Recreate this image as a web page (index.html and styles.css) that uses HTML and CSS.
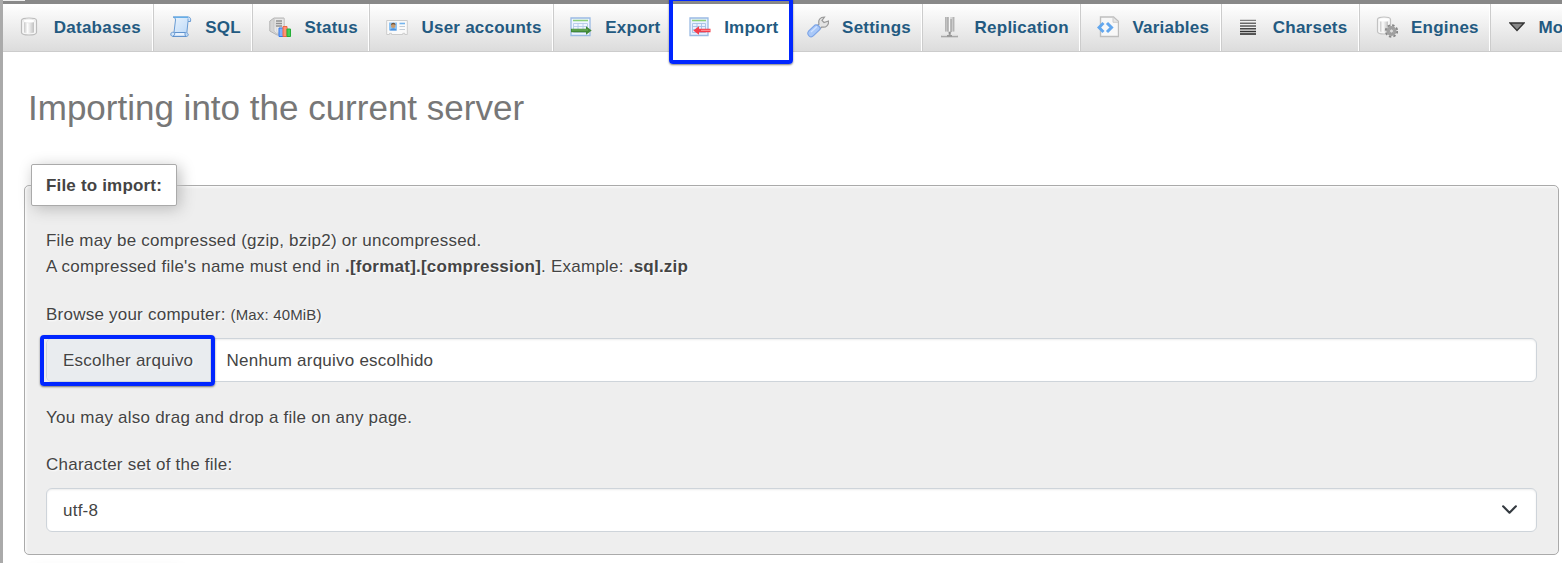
FILE: index.html
```html
<!DOCTYPE html>
<html lang="en">
<head>
<meta charset="utf-8">
<title>Import</title>
<link rel="stylesheet" href="styles.css">
</head>
<body>
<svg width="0" height="0" class="defs">
  <defs>
    <linearGradient id="metal" x1="0" x2="1"><stop offset="0" stop-color="#c8c8c8"/><stop offset=".35" stop-color="#fdfdfd"/><stop offset="1" stop-color="#c0c0c0"/></linearGradient>
    <linearGradient id="sheet" x1="0" x2="1" y2="1"><stop offset="0" stop-color="#edf5fd"/><stop offset="1" stop-color="#b5d5f7"/></linearGradient>
    <linearGradient id="lines" gradientUnits="userSpaceOnUse" x1="0" x2="0" y1="3" y2="18"><stop offset="0" stop-color="#888"/><stop offset="1" stop-color="#222"/></linearGradient>
  </defs>
</svg>
<div class="window">
  <div class="sidebar-edge"></div>
  <div class="page">
    <div class="top-band"><div class="top-notch"></div></div>
    <nav class="tabs">
      <a class="tab tab-first">
        <svg class="icon" viewBox="0 0 22 22"><path d="M3.500 4.500v12c0 1.500 3 2.500 7.500 2.500s7.500-1 7.500-2.500v-12c0-1.500-3-2.500-7.500-2.500s-7.500 1-7.500 2.500z" fill="#f6f6f6" stroke="#bcbcbc" stroke-width="1.200"/><path d="M6 6v10.500c2 1 8 1 10 0V6z" fill="url(#metal)"/><ellipse cx="11" cy="5" rx="6" ry="1.900" fill="#fff" stroke="#ddd" stroke-width=".6"/></svg>
        <span>Databases</span></a>
      <a class="tab">
        <svg class="icon" viewBox="0 0 22 22"><path d="M3 1h15.500c2 .3 2.500 2 2 4.500H18L16.800 17c2 .5 2 3-.3 3.500H3c-3-.3-2.800-4-.5-4.200H4L5.500 4C5.500 2 4.500 1.500 3 1z" fill="url(#sheet)" stroke="#699bd3"/><path d="M4.500 16.500h11c-1 1.500-.5 3 .5 3.800H3c1.500-.8 2-2 1.500-3.800z" fill="#e8f3ff" stroke="#5489c7" stroke-width=".9"/><path d="M4 1.200h14" stroke="#58a9e8" stroke-width="1.200"/><path d="M18 5.500V2.500" stroke="#78a6d8"/></svg>
        <span>SQL</span></a>
      <a class="tab">
        <svg class="icon" viewBox="0 0 22 22"><path d="M.8 5 5 2h10v17H8l-7.200-4z" fill="#d5d5d5" stroke="#b4b4b4"/><path d="M5 3v12l3 3M5.500 2.500H15V17H8.500" fill="#e8e8e8" stroke="#c4c4c4" stroke-width=".8"/><path d="M7 5h6M7 7.500h6M7 10h6" stroke="#909090" stroke-width="1.300"/><path d="M10 12h4.500v8.500H10z" fill="#7eafff" stroke="#3479e8"/><path d="M14 10.500h4v10h-4z" fill="#ff9274" stroke="#ee6645"/><path d="M18 13h3.500v7.500H18z" fill="#45ce55" stroke="#25ae37"/></svg>
        <span>Status</span></a>
      <a class="tab">
        <svg class="icon" viewBox="0 0 22 22"><path d="M.7 4.500h20.600v14h-2.500v-1.200h-2v1.200H5.500v-1.200h-2v1.200H.7z" fill="#fafafa" stroke="#ccc"/><path d="M3 6.500h8v8H3z" fill="#8ec4f4"/><path d="M4 14.500c.5-3 6-3 6.500 0z" fill="#4c91dd"/><circle cx="7.200" cy="9.700" r="2.300" fill="#c89b6e"/><path d="M5 9c0-3 4.500-3 4.500 0-1.500-1-3-1-4.500 0z" fill="#6f5138"/><path d="M13.500 7.500h5.500" stroke="#74b4ee" stroke-width="1.600"/><path d="M13.500 10.500h5.500M13.500 13.500h5.500" stroke="#c2ccd6"/></svg>
        <span>User accounts</span></a>
      <a class="tab">
        <svg class="icon" viewBox="0 0 22 22"><path d="M1 2h19v17.500H1z" fill="#f0f6ff" stroke="#9abbe4" stroke-width="1.300"/><path d="M3 4.500h15" stroke="#8bd078" stroke-width="1.500"/><path d="M3.500 7.500h14v9h-14zM3.500 10.500h14M3.500 13.500h14M8 7.500v9M13 7.500v9" fill="none" stroke="#b4cbea" stroke-width=".9"/><path d="M1 12.700h15v-2.500l5.700 4.300-5.700 4.300v-2.500H1z" fill="#438a38"/><path d="M2 14h16" stroke="#73b662"/></svg>
        <span>Export</span></a>
      <a class="tab tab-active">
        <svg class="icon" viewBox="0 0 22 22"><path d="M1 2h18v17.500H1z" fill="#e8f0ff" stroke="#9abbe4" stroke-width="1.300"/><path d="M3 4.500h14" stroke="#8bd078" stroke-width="1.500"/><path d="M3.500 7.500h13v9h-13zM3.500 10.500h13M3.500 13.500h13M8 7.500v9M12.500 7.500v9" fill="none" stroke="#a4bee4" stroke-width=".9"/><path d="M21.500 12.700H10v-2.500l-5.700 4.300 5.700 4.300v-2.500h11.500z" fill="#f43e4d"/><path d="M12 14.400h9" stroke="#ff8a92" stroke-width="1.200"/></svg>
        <span>Import</span></a>
      <a class="tab">
        <svg class="icon" viewBox="0 0 22 22"><path d="m10 10 2-2c-1-4 1-7 5.500-7l-2.500 3.500 2 2 4.500-1.500c.5 4-2.500 7-6.500 6l-2.500 2z" fill="#e4e4e4" stroke="#999" stroke-width="1.200"/><path d="M2 19.800c-1.800-1.500-1.500-3.500-.2-5L8 9c2.500-.8 5.800 2 5 4.500l-6.500 6.200c-1.200 1.200-3.300 1.200-4.500.1z" fill="#a9c8f8" stroke="#7ba3e6" stroke-width="1.100"/><path d="m4 16 6-5.500" stroke="#d0e2ff" stroke-width="1.300"/></svg>
        <span>Settings</span></a>
      <a class="tab">
        <svg class="icon" viewBox="0 0 22 22"><path d="M6 1h9.500v14.500h-2L10.700 18 8 15.500H6z" fill="#d6d6d6"/><path d="M6.800 1v14.500M14.500 1v14.500" stroke="#b4b4b4" stroke-width="1.600"/><path d="M9 1v14.500M12 3v13" stroke="#999" stroke-width="1.200"/><path d="M10.500 1v14" stroke="#f6f6f6" stroke-width="1.300"/><path d="M10.700 16v4" stroke="#8e8e8e" stroke-width="2"/><path d="M2 20.500h17" stroke="#a8a8a8" stroke-width="1.700"/><path d="M3 19.300h15" stroke="#ddd"/><path d="M8 19h5v1.700H8z" fill="#999"/></svg>
        <span>Replication</span></a>
      <a class="tab">
        <svg class="icon" viewBox="0 0 22 22"><path d="M3.500 1h13l5 4.500v15h-18z" fill="#f8f8f8" stroke="#bebebe" stroke-width="1.400"/><path d="M16 1.500v4.800h5" fill="#e6e6e6" stroke="#ccc"/><path d="M6.500 7 2 11.500 6.500 16M10 7l4.500 4.500L10 16" fill="none" stroke="#62a7ee" stroke-width="3"/></svg>
        <span>Variables</span></a>
      <a class="tab">
        <svg class="icon" viewBox="0 0 22 22"><path d="M3 3.800h16v1.200H3zM3 6.500h16v1.500H3zM3 9.300h16v1.500H3zM3 12h16v1.500H3zM3 14.700h16v1.500H3zM3 17.300h16v1.500H3z" fill="url(#lines)"/></svg>
        <span>Charsets</span></a>
      <a class="tab">
        <svg class="icon" viewBox="0 0 22 22"><path d="M1.500 3.500v12c0 1.500 3 2.500 6.500 2.500s6.500-1 6.500-2.500v-12C14.500 2 11.500 1 8 1S1.500 2 1.500 3.500z" fill="#f6f6f6" stroke="#c2c2c2" stroke-width="1.200"/><path d="M4 5.500v10c2 1 6 1 8 0v-10z" fill="url(#metal)"/><ellipse cx="8" cy="3.800" rx="5" ry="1.500" fill="#fff"/><circle cx="15.500" cy="15" r="5.700" fill="none" stroke="#888" stroke-width="2" stroke-dasharray="2.400 2.070"/><circle cx="15.500" cy="15" r="3.600" fill="#ddd" stroke="#a0a0a0" stroke-width="2.800"/><circle cx="15.500" cy="15" r="2" fill="#ddd" stroke="#888" stroke-width=".7"/></svg>
        <span>Engines</span></a>
      <a class="tab tab-more">
        <svg class="caret" viewBox="0 0 16 10"><path d="M1 1h14L8 8.500z" fill="#888" stroke="#333" stroke-width="1.300"/></svg>
        <span>More</span></a>
    </nav>
    <main class="content">
      <h1 class="title">Importing into the current server</h1>
      <section class="panel">
        <div class="legend">File to import:</div>
        <p class="note">File may be compressed (gzip, bzip2) or uncompressed.<br>A compressed file's name must end in <b>.[format].[compression]</b>. Example: <b>.sql.zip</b></p>
        <p class="label">Browse your computer: <small>(Max: 40MiB)</small></p>
        <div class="control file">
          <div class="file-button">Escolher arquivo</div>
          <div class="file-name">Nenhum arquivo escolhido</div>
          <div class="highlight highlight-file"></div>
        </div>
        <p class="hint">You may also drag and drop a file on any page.</p>
        <p class="charset">Character set of the file:</p>
        <div class="control select"><span>utf-8</span>
          <svg class="chevron" viewBox="0 0 16 16"><path d="m2 5 6 6 6-6" fill="none" stroke="#343a40" stroke-width="2" stroke-linecap="round" stroke-linejoin="round"/></svg>
        </div>
      </section>
      <div class="legend legend-next"></div>
    </main>
    <div class="highlight highlight-tab"></div>
  </div>
</div>
</body>
</html>
```
FILE: styles.css
```css
* { box-sizing: border-box; }
body {
  margin: 0;
  overflow: hidden;
  background: #fff;
  color: #444;
  font: 17px/26px "Liberation Sans", Arial, sans-serif;
  letter-spacing: .23px;
}
.defs { position: absolute; }
.window { display: flex; width: 100vw; height: 100vh; overflow: hidden; }
.sidebar-edge { flex: none; width: 3px; background: #aaa; }
.page { position: relative; flex: 1; min-width: 0; overflow: hidden; }
.top-band { height: 4px; background: #888; }
.top-notch { width: 22px; height: 1px; background: #eee; }
.tabs {
  display: flex;
  height: 48px;
  background: linear-gradient(#fff, #dcdcdc);
  border-bottom: 1px solid #ccc;
}
.tab {
  flex: none;
  display: flex;
  align-items: center;
  border-left: 1px solid #ccc;
  border-right: 1px solid #fff;
  padding: 0 10.400px 0 15.800px;
  color: #235a81;
  font-weight: bold;
  letter-spacing: .23px;
  white-space: nowrap;
}
.tab-first { border-left: 0; padding-left: 15.400px; padding-right: 11px; }
.tab-active { height: 48px; padding-bottom: 1px; border-left-color: #fff; background: #fff; }
.icon { flex: none; width: 22px; height: 22px; margin-right: 13.460px; margin-bottom: 1px; }
.caret { flex: none; width: 16px; height: 10px; margin: 0 13px 1px 2.500px; }
.content { padding: 37px 3px 0 21px; }
.title {
  margin: 0 0 58px;
  padding-left: 4px;
  color: #777;
  font-size: 35px;
  font-weight: normal;
  letter-spacing: 0;
  line-height: 38px;
}
.panel {
  height: 370px;
  padding: 0 21px 0 21px;
  border: 1px solid #aaa;
  border-radius: 5px;
  background: #eee;
  box-shadow: 1px 1px 3px #fff inset;
  text-shadow: 1px 1px 2px #fff;
}
.legend {
  width: 146px;
  height: 42px;
  margin: -22px 0 0 -15px;
  padding-left: 14px;
  border: 1px solid #aaa;
  border-radius: 2px;
  background: #fff;
  box-shadow: 3px 3px 15px #bbb;
  font-weight: bold;
  letter-spacing: .18px;
  line-height: 41px;
}
.legend-next { margin: 17px 0 0 7px; }
.note { margin: 22px 0 22px; }
.label { margin: 0 0 10px; }
.label small { font-size: 15px; letter-spacing: .15px; }
.control {
  position: relative;
  display: flex;
  align-items: center;
  height: 44px;
  border: 1px solid #ced4da;
  border-radius: 6px;
  background: #fff;
  box-shadow: inset 0 1px 2px rgba(0, 0, 0, .075);
  line-height: 28px;
}
.file-button {
  width: 164px;
  height: 42px;
  padding-left: 16px;
  border-right: 1px solid #ced4da;
  border-radius: 5px 0 0 5px;
  background: #e9ecef;
  line-height: 43px;
}
.file-name { padding: 1px 0 0 15.500px; }
.hint { margin: 23px 0 21px; }
.charset { margin: 0 0 10px; }
.select { justify-content: space-between; padding: 1px 18px 0 16px; }
.chevron { width: 17px; height: 17px; margin-bottom: 2px; }
.highlight {
  position: absolute;
  border: 4px solid #0026ff;
  border-radius: 4px;
  box-shadow: 0 1px 2px rgba(0, 0, 0, .5);
}
.highlight-tab { left: 666px; top: -3px; width: 124px; height: 67px; }
.highlight-file { left: -7px; top: -4px; width: 175px; height: 51px; }
```
